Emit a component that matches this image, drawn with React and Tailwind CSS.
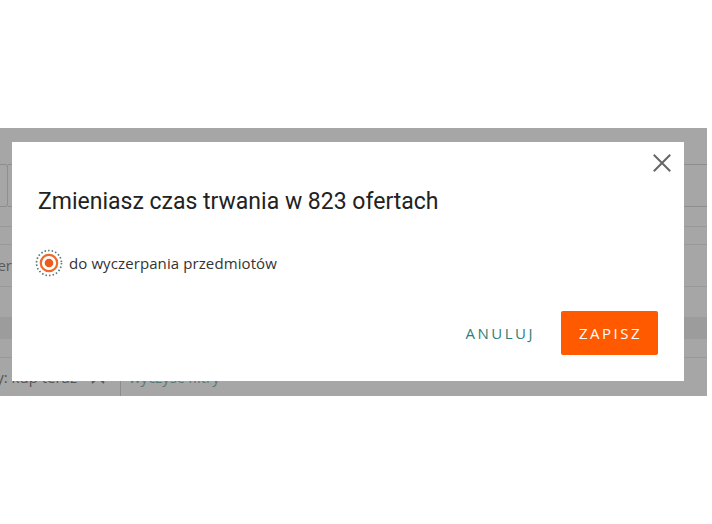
import React from "react";

function CloseIcon() {
  return (
    <svg width="18" height="18" viewBox="0 0 18 18" fill="none">
      <path d="M1.5 1.5 L16.5 16.5 M16.5 1.5 L1.5 16.5" stroke="#666" strokeWidth="2" strokeLinecap="square" />
    </svg>
  );
}

function Radio() {
  return (
    <svg width="30" height="30" viewBox="0 0 30 30" fill="none" className="shrink-0">
      <circle cx="15" cy="15" r="12.5" stroke="#4f7d74" strokeWidth="1.7" strokeDasharray="1.5 2.1" />
      <circle cx="15" cy="15" r="8.2" stroke="#f0692a" strokeWidth="2.2" fill="white" />
      <circle cx="15" cy="15" r="4.3" fill="#ec5a1c" />
    </svg>
  );
}

export default function App() {
  return (
    <div className="w-[712px] h-[524px] bg-white overflow-hidden" style={{ fontFamily: "'Open Sans', sans-serif" }}>
      <div className="h-[128px]" />
      <div className="relative w-[707px] h-[268px] bg-[#a6a6a6] overflow-hidden">
        {/* dimmed page content behind the overlay */}
        <div className="flex flex-col pt-[36px]">
          <div className="flex h-[43px]">
            <div className="w-[8px] h-full rounded-r-[3px] border border-l-0 border-[#8e8e8e]" />
            <div className="flex-1 border-t border-b border-[#8e8e8e]" />
          </div>
          <div className="h-[19px]" />
          <div className="h-[18px] border-t border-[#999]" />
          <div className="h-[43px] border-t border-b border-[#999] flex items-center text-[15px] text-[#5a5a5a]">
            <div className="w-[12px] overflow-hidden flex justify-end whitespace-nowrap">
              <span>Filter</span>
            </div>
          </div>
          <div className="h-[30px]" />
          <div className="h-[22px] bg-[#9c9c9c]" />
          <div className="h-[18px]" />
          <div className="border-t border-[#999] flex items-center h-[39px] text-[15px]">
            <div className="w-[77px] shrink-0 overflow-hidden flex justify-end whitespace-nowrap text-[#555]">
              <span>Forma sprzedaży: kup teraz</span>
            </div>
            <svg width="16" height="16" viewBox="0 0 16 16" className="ml-[13px] shrink-0" fill="none">
              <path d="M2 2 L14 14 M14 2 L2 14" stroke="#5a5a5a" strokeWidth="2" />
            </svg>
            <div className="ml-[14px] w-px h-full bg-[#8c8c8c]" />
            <span className="ml-[8px] text-[#587a78] whitespace-nowrap">wyczyść filtry</span>
          </div>
        </div>

        {/* modal */}
        <div className="absolute left-[12px] top-[14px] w-[672px] h-[239px] bg-white flex flex-col px-[26px]">
          <button className="absolute left-[641px] top-[12px] w-[18px] h-[18px]">
            <CloseIcon />
          </button>
          <h2
            className="mt-[45px] h-[29px] leading-[29px] text-[23px] text-[#222] font-normal whitespace-nowrap"
            style={{ fontFamily: "Roboto, sans-serif" }}
          >
            Zmieniasz czas trwania w 823 ofertach
          </h2>
          <div className="mt-[32px] h-[30px] flex items-center ml-[-4px] gap-[5px]">
            <Radio />
            <span className="text-[15px] tracking-[0.1px] text-[#333]">do wyczerpania przedmiotów</span>
          </div>
          <div className="mt-[33px] flex justify-end items-center gap-[26px]">
            <span className="text-[15px] tracking-[2.5px] text-[#2f8079]">ANULUJ</span>
            <div className="w-[97px] h-[44px] bg-[#ff5a00] rounded-[2px] flex items-center justify-center pl-[2px] text-[15px] tracking-[2.5px] text-white">
              ZAPISZ
            </div>
          </div>
        </div>
      </div>
    </div>
  );
}
